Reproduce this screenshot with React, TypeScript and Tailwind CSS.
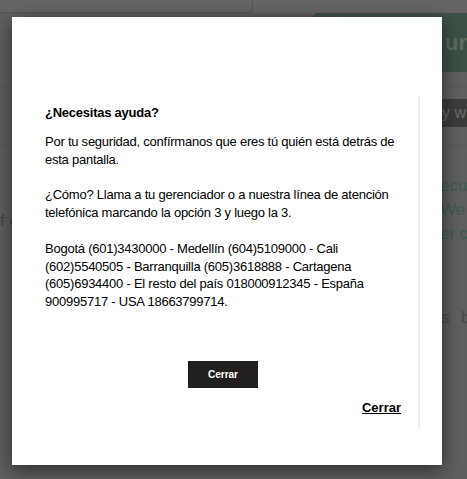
import React from "react";

const PHONES =
  "Bogotá (601)3430000 - Medellín (604)5109000 - Cali (602)5540505 - Barranquilla (605)3618888 - Cartagena (605)6934400 - El resto del país 018000912345 - España 900995717 - USA 18663799714.";

// Página de fondo, atenuada por el velo del modal.
function BackdropPage() {
  return (
    <div className="flex h-full flex-col bg-[#5e5f5e] text-[#3f3f3f]">
      <div className="flex h-[13px]">
        <div className="w-[253px] rounded-br-md border-r border-b border-[#575857] bg-[#646564]" />
        <div className="flex-1 bg-[#646564]" />
      </div>
      <div className="flex h-[59px]">
        <div className="w-[312px] shrink-0" />
        <div className="flex flex-1 items-center rounded-tl-md bg-[#3d5046] pl-[133px]">
          <span className="whitespace-nowrap text-[22px] font-bold text-[#5b6c62]">ure</span>
        </div>
      </div>
      <div className="h-[15px] border-b border-[#585958]" />
      <div className="mt-[12px] flex h-[28px]">
        <div className="w-[442px] shrink-0" />
        <div className="flex flex-1 items-center whitespace-nowrap bg-[#3b3c3b] text-[16px] text-[#6a6a6a]">y w</div>
      </div>
      <div className="mt-[18px] h-px bg-[#585958]" />
      <div className="mt-[28px] flex text-[17px] leading-[24px] text-[#3f5a52]">
        <div className="w-[440px] shrink-0" />
        <div className="whitespace-nowrap">
          <div>ecure</div>
          <div>We c</div>
          <div>er c</div>
        </div>
      </div>
      <div className="-mt-[38px] text-[17px] text-[#46484a]">f c</div>
      <div className="mt-[72px] flex font-['Liberation_Mono',monospace] text-[17px] text-[#4a4a4a]">
        <div className="w-[440px] shrink-0" />
        <div className="whitespace-nowrap">s bu</div>
      </div>
    </div>
  );
}

export default function App() {
  return (
    <div className="relative h-[479px] w-full overflow-hidden font-['Liberation_Sans',Arial,sans-serif]">
      <BackdropPage />

      <div className="absolute inset-0 pl-[12px] pt-[17px]">
        <div className="flex h-[448px] w-[430px] flex-col bg-white pt-[79px] pr-[22px] pb-[36px] shadow-[0_5px_18px_rgba(0,0,0,0.55)]">
          <div className="flex flex-1 flex-col border-r-2 border-[#f0f0f0] pt-[8px] pl-[33px] pr-[11px] text-[13px] leading-[17.8px] tracking-[-0.24px] text-black">
            <h2 className="font-bold leading-[18px]">¿Necesitas ayuda?</h2>
            <div className="mt-[11px]">
              <p>Por tu seguridad, confírmanos que eres tú quién está detrás de esta pantalla.</p>
              <br />
              <p>¿Cómo? Llama a tu gerenciador o a nuestra línea de atención telefónica marcando la opción 3 y luego la 3.</p>
              <br />
              <p>{PHONES}</p>
            </div>
            <div className="mt-[50px] flex justify-center pr-[6px]">
              <button className="h-[27px] w-[70px] bg-[#221f1f] text-[10px] font-bold tracking-normal text-white">Cerrar</button>
            </div>
            <div className="mt-[11px] flex justify-end pr-[6px]">
              <a href="#" className="text-[13px] font-bold leading-[18px] tracking-normal text-black underline">
                Cerrar
              </a>
            </div>
          </div>
        </div>
      </div>
    </div>
  );
}
